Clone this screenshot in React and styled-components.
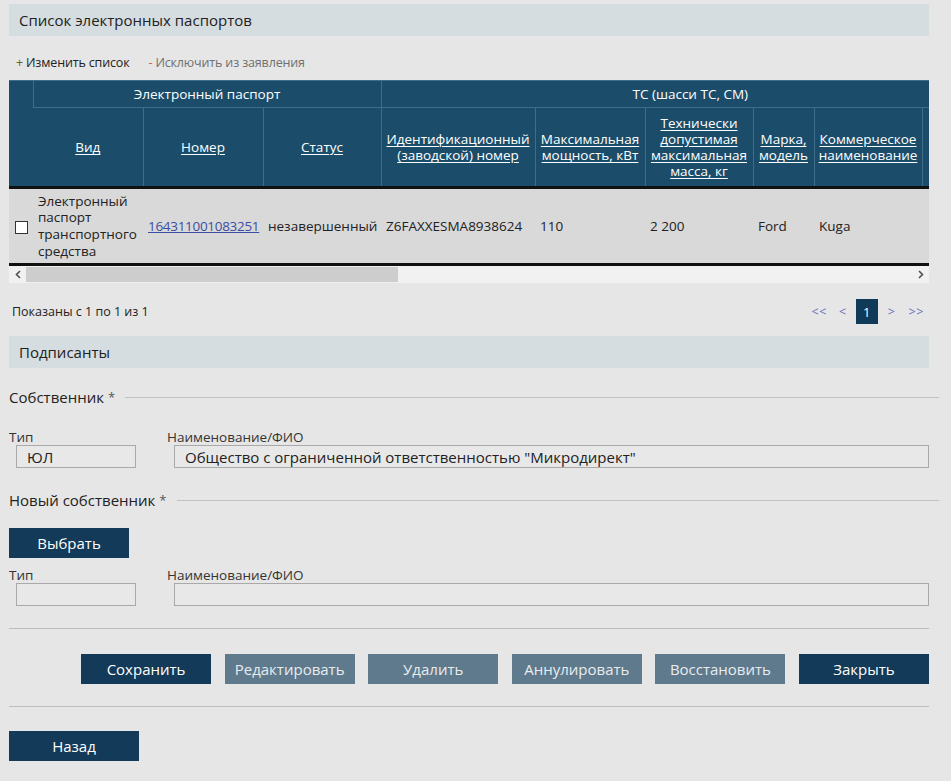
import React from "react";
import styled, { createGlobalStyle } from "styled-components";

const Global = createGlobalStyle`
  html, body { margin: 0; padding: 0; background: #e6e6e6; }
  body { font-family: "Open Sans", "Noto Sans", sans-serif; color: #222; }
  * { box-sizing: border-box; }
`;

const Page = styled.div`
  padding: 4px 22px 20px 9px;
  width: 951px;
`;

const SectionBar = styled.div`
  height: 32px;
  background: #d5dde1;
  display: flex;
  align-items: center;
  padding-left: 10px;
  font-size: 15px;
  color: #222;
`;

const Toolbar = styled.div`
  display: flex;
  gap: 19px;
  padding: 19px 0 9px 7px;
  font-size: 12.5px;
  line-height: 16px;
`;

const ToolLink = styled.span`
  color: ${(p) => (p.$muted ? "#707070" : "#222")};
  letter-spacing: -0.15px;
`;

const Sign = styled.span`
  color: ${(p) => p.$color};
  margin-right: 3px;
`;

const TableWrap = styled.div`
  width: 920px;
  overflow: hidden;
  background: #d9d9d9;
`;

const Table = styled.table`
  width: 990px;
  table-layout: fixed;
  border-collapse: collapse;
  font-size: 13.5px;
`;

const Th = styled.th`
  background: #1b4d6b;
  color: #fff;
  font-weight: normal;
  text-align: center;
  vertical-align: middle;
  border-left: 1px solid #3f6d8a;
  border-top: 1px solid #3f6d8a;
  line-height: 16px;
  padding: ${(p) => (p.$top ? "5px 4px" : "7px 4px")};
  height: ${(p) => (p.$top ? "27px" : "79px")};
  &:first-child { border-left: none; }
`;

const HeadLink = styled.span`
  text-decoration: underline;
  text-underline-offset: 2px;
`;

const HeadStub = styled.span`
  display: inline-block;
  width: 50px;
  height: 30px;
  border-bottom: 1px solid #fff;
  vertical-align: middle;
`;

const HeadRow = styled.tr`
  border-bottom: 3px solid #111;
`;

const DataRow = styled.tr`
  border-bottom: 3px solid #111;
`;

const Td = styled.td`
  height: 77px;
  padding: 0 5px;
  vertical-align: middle;
  line-height: 16.7px;
  color: #222;
  text-align: ${(p) => (p.$center ? "center" : "left")};
`;

const Check = styled.span`
  display: inline-block;
  width: 13px;
  height: 13px;
  background: #fff;
  border: 1px solid #333;
  vertical-align: middle;
`;

const NumLink = styled.a`
  color: #3b4ea3;
  text-decoration: underline;
  letter-spacing: -0.3px;
`;

const ScrollBar = styled.div`
  height: 17px;
  background: #f1f1f1;
  display: flex;
  align-items: stretch;
`;

const ScrollArrow = styled.div`
  width: 17px;
  display: flex;
  align-items: center;
  justify-content: center;
`;

const ScrollTrack = styled.div`
  flex: 1;
  display: flex;
  align-items: center;
`;

const Thumb = styled.div`
  height: 15px;
  background: #cdcdcd;
`;

const PagerRow = styled.div`
  display: flex;
  justify-content: space-between;
  align-items: center;
  padding: 16px 5px 12px 3px;
  font-size: 12.5px;
`;

const Pager = styled.div`
  display: flex;
  align-items: center;
`;

const PageLink = styled.span`
  color: #6a70c0;
  font-size: 12.5px;
  margin-left: ${(p) => p.$ml || 0}px;
  letter-spacing: 0.6px;
`;

const PageActive = styled.span`
  width: 22px;
  height: 25px;
  background: #0f3b58;
  color: #fff;
  display: flex;
  align-items: center;
  justify-content: center;
  font-size: 13px;
  margin-left: 9px;
`;

const Legend = styled.div`
  display: flex;
  align-items: center;
  margin-top: ${(p) => p.$mt || 19}px;
  margin-right: -10px;
  font-size: 15px;
  line-height: 20px;
  &::after {
    content: "";
    flex: 1;
    height: 1px;
    background: #c2c2c2;
    margin-left: 10px;
  }
`;

const Star = styled.span`
  color: #555;
  margin-left: 4px;
  font-size: 13px;
`;

const FieldRow = styled.div`
  display: grid;
  grid-template-columns: 158px 1fr;
  margin-top: ${(p) => p.$mt}px;
`;

const Field = styled.div`
  display: flex;
  flex-direction: column;
`;

const Label = styled.label`
  font-size: 13.5px;
  line-height: 16px;
  color: #333;
`;

const Input = styled.div`
  margin-left: 7px;
  width: ${(p) => (p.$w ? p.$w + "px" : "auto")};
  height: 23px;
  border: 1px solid #a9a9a9;
  background: #e8e8e8;
  padding-left: 10px;
  display: flex;
  align-items: center;
  font-size: 15px;
  color: #222;
`;

const Button = styled.button`
  width: ${(p) => p.$w || 130}px;
  height: 30px;
  border: none;
  background: ${(p) => (p.$disabled ? "#5f7a8c" : "#133a58")};
  color: ${(p) => (p.$disabled ? "#e8ecef" : "#fff")};
  font-family: inherit;
  font-size: 15px;
  padding: 0;
  cursor: pointer;
`;

const SelectWrap = styled.div`
  margin-top: 18px;
`;

const Divider = styled.div`
  height: 1px;
  background: #bdbdbd;
  margin-top: ${(p) => p.$mt}px;
`;

const ActionRow = styled.div`
  display: flex;
  justify-content: flex-end;
  gap: 13.6px;
  margin-top: 25px;
`;

const BackWrap = styled.div`
  margin-top: 24px;
`;

const Chevron = ({ dir }) => (
  <svg width="6" height="9" viewBox="0 0 6 9">
    <path
      d={dir === "left" ? "M5 1 L1.5 4.5 L5 8" : "M1 1 L4.5 4.5 L1 8"}
      fill="none"
      stroke="#505050"
      strokeWidth="1.6"
    />
  </svg>
);

const cols = [24, 110, 120, 118, 154, 110, 108, 61, 108, 77];

export default function App() {
  return (
    <>
      <Global />
      <Page>
        <SectionBar>Список электронных паспортов</SectionBar>
        <Toolbar>
          <ToolLink>
            <Sign $color="#5d6b25">+</Sign>Изменить список
          </ToolLink>
          <ToolLink $muted>
            <Sign $color="#e25555">-</Sign>Исключить из заявления
          </ToolLink>
        </Toolbar>
        <TableWrap>
          <Table>
            <colgroup>
              {cols.map((w, i) => (
                <col key={i} style={{ width: w }} />
              ))}
            </colgroup>
            <thead>
              <tr>
                <Th rowSpan={2} />
                <Th $top colSpan={3}>Электронный паспорт</Th>
                <Th $top colSpan={6}>ТС (шасси ТС, СМ)</Th>
              </tr>
              <HeadRow>
                <Th><HeadLink>Вид</HeadLink></Th>
                <Th><HeadLink>Номер</HeadLink></Th>
                <Th><HeadLink>Статус</HeadLink></Th>
                <Th><HeadLink>Идентификационный (заводской) номер</HeadLink></Th>
                <Th><HeadLink>Максимальная мощность, кВт</HeadLink></Th>
                <Th><HeadLink>Технически допустимая максимальная масса, кг</HeadLink></Th>
                <Th><HeadLink>Марка, модель</HeadLink></Th>
                <Th><HeadLink>Коммерческое наименование</HeadLink></Th>
                <Th><HeadStub /></Th>
              </HeadRow>
            </thead>
            <tbody>
              <DataRow>
                <Td $center><Check /></Td>
                <Td>Электронный паспорт транспортного средства</Td>
                <Td><NumLink>164311001083251</NumLink></Td>
                <Td>незавершенный</Td>
                <Td>Z6FAXXESMA8938624</Td>
                <Td>110</Td>
                <Td>2 200</Td>
                <Td>Ford</Td>
                <Td>Kuga</Td>
                <Td />
              </DataRow>
            </tbody>
          </Table>
          <ScrollBar>
            <ScrollArrow><Chevron dir="left" /></ScrollArrow>
            <ScrollTrack>
              <Thumb style={{ width: 372 }} />
            </ScrollTrack>
            <ScrollArrow><Chevron dir="right" /></ScrollArrow>
          </ScrollBar>
        </TableWrap>
        <PagerRow>
          <span>Показаны с 1 по 1 из 1</span>
          <Pager>
            <PageLink>&lt;&lt;</PageLink>
            <PageLink $ml={12}>&lt;</PageLink>
            <PageActive>1</PageActive>
            <PageLink $ml={10}>&gt;</PageLink>
            <PageLink $ml={13}>&gt;&gt;</PageLink>
          </Pager>
        </PagerRow>
        <SectionBar>Подписанты</SectionBar>
        <Legend>
          Собственник<Star>*</Star>
        </Legend>
        <FieldRow $mt={22}>
          <Field>
            <Label>Тип</Label>
            <Input $w={120}>ЮЛ</Input>
          </Field>
          <Field>
            <Label>Наименование/ФИО</Label>
            <Input>Общество с ограниченной ответственностью "Микродирект"</Input>
          </Field>
        </FieldRow>
        <Legend $mt={22}>
          Новый собственник<Star>*</Star>
        </Legend>
        <SelectWrap>
          <Button $w={120}>Выбрать</Button>
        </SelectWrap>
        <FieldRow $mt={9}>
          <Field>
            <Label>Тип</Label>
            <Input $w={120} />
          </Field>
          <Field>
            <Label>Наименование/ФИО</Label>
            <Input />
          </Field>
        </FieldRow>
        <Divider $mt={22} />
        <ActionRow>
          <Button>Сохранить</Button>
          <Button $disabled>Редактировать</Button>
          <Button $disabled>Удалить</Button>
          <Button $disabled>Аннулировать</Button>
          <Button $disabled>Восстановить</Button>
          <Button>Закрыть</Button>
        </ActionRow>
        <Divider $mt={22} />
        <BackWrap>
          <Button>Назад</Button>
        </BackWrap>
      </Page>
    </>
  );
}
